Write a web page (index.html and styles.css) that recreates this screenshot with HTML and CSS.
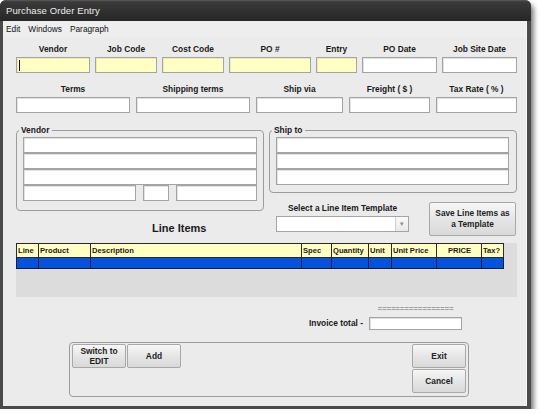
FILE: index.html
```html
<!DOCTYPE html>
<html>
<head>
<meta charset="utf-8">
<title>Purchase Order Entry</title>
<link rel="stylesheet" href="styles.css">
</head>
<body>
<div class="window">
  <div class="titlebar">Purchase Order Entry</div>
  <div class="client">
    <div class="menubar">
      <span>Edit</span><span>Windows</span><span>Paragraph</span>
    </div>
    <div class="form">
      <div class="row row-top">
        <div class="field"><div class="label">Vendor</div><div class="box yellow"><span class="caret"></span></div></div>
        <div class="field"><div class="label">Job Code</div><div class="box yellow"></div></div>
        <div class="field"><div class="label">Cost Code</div><div class="box yellow"></div></div>
        <div class="field"><div class="label">PO #</div><div class="box yellow"></div></div>
        <div class="field"><div class="label">Entry</div><div class="box yellow"></div></div>
        <div class="field"><div class="label">PO Date</div><div class="box"></div></div>
        <div class="field"><div class="label">Job Site Date</div><div class="box"></div></div>
      </div>
      <div class="row row-second">
        <div class="field"><div class="label">Terms</div><div class="box"></div></div>
        <div class="field"><div class="label">Shipping terms</div><div class="box"></div></div>
        <div class="field"><div class="label">Ship via</div><div class="box"></div></div>
        <div class="field"><div class="label">Freight ( $ )</div><div class="box"></div></div>
        <div class="field"><div class="label">Tax Rate ( % )</div><div class="box"></div></div>
      </div>

      <div class="groups">
        <div class="col">
          <fieldset class="group vendor">
            <legend>Vendor</legend>
            <div class="box"></div>
            <div class="box"></div>
            <div class="box"></div>
            <div class="city-row">
              <div class="box city"></div>
              <div class="box state"></div>
              <div class="box zip"></div>
            </div>
          </fieldset>
          <div class="section-title">Line Items</div>
        </div>
        <div class="col">
          <fieldset class="group shipto">
            <legend>Ship to</legend>
            <div class="box"></div>
            <div class="box"></div>
            <div class="box"></div>
          </fieldset>
          <div class="template-row">
            <div class="template">
              <div class="label">Select a Line Item Template</div>
              <div class="combo"><div class="combo-btn">&#9662;</div></div>
            </div>
            <button class="btn save">Save Line Items as<br>a Template</button>
          </div>
        </div>
      </div>

      <div class="grid-area">
        <table class="items">
          <colgroup>
            <col class="c-line"><col class="c-product"><col class="c-desc"><col class="c-spec"><col class="c-qty"><col class="c-unit"><col class="c-uprice"><col class="c-price"><col class="c-tax">
          </colgroup>
          <thead>
            <tr><th>Line</th><th>Product</th><th>Description</th><th>Spec</th><th>Quantity</th><th>Unit</th><th>Unit Price</th><th class="center">PRICE</th><th>Tax?</th></tr>
          </thead>
          <tbody>
            <tr class="selected"><td></td><td></td><td></td><td></td><td></td><td></td><td></td><td></td><td></td></tr>
          </tbody>
        </table>
      </div>

      <div class="totals">
        <div></div>
        <div class="rule">=================</div>
        <div class="total-label">Invoice total -</div>
        <div class="box total"></div>
      </div>

      <div class="actions">
        <div class="left-btns">
          <button class="btn act">Switch to<br>EDIT</button>
          <button class="btn act">Add</button>
        </div>
        <div class="right-btns">
          <button class="btn act">Exit</button>
          <button class="btn act">Cancel</button>
        </div>
      </div>
    </div>
  </div>
</div>
</body>
</html>
```
FILE: styles.css
```css
html, body {
  margin: 0;
  padding: 0;
  background: #ffffff;
}

body {
  font-family: "Liberation Sans", Arial, sans-serif;
  color: #1a1a1a;
}

.window {
  width: 531px;
  height: 409px;
  box-sizing: border-box;
  background: #4a4a4a;
  border-radius: 6px 6px 0 0;
  padding: 0 4px 3px 3px;
  box-shadow: 3px 4px 5px rgba(0, 0, 0, 0.5);
  display: flex;
  flex-direction: column;
}

.titlebar {
  height: 21px;
  margin: 0 -4px 0 -3px;
  padding-left: 6px;
  background: linear-gradient(#5a5a5a 0, #3a3a3a 2px, #262626 100%);
  border-radius: 6px 6px 0 0;
  color: #ececec;
  font-size: 9.5px;
  line-height: 22px;
  letter-spacing: 0.1px;
}

.client {
  flex: 1;
  background: #ebebeb;
  border-right: 1px solid #f8f8f8;
}

.menubar {
  height: 16px;
  padding-left: 3px;
  display: flex;
  gap: 8px;
  font-size: 8.3px;
  line-height: 16px;
  color: #111;
  background: #eeeeee;
}

.form {
  padding: 0 9px 0 13px;
}

.row {
  display: flex;
}

.row-top {
  margin-top: 5px;
  gap: 5px;
}

.row-second {
  margin-top: 9px;
  gap: 6px;
}

.row-top .field:nth-child(1) { width: 74px; }
.row-top .field:nth-child(2) { width: 62px; }
.row-top .field:nth-child(3) { width: 62px; }
.row-top .field:nth-child(4) { width: 82px; }
.row-top .field:nth-child(5) { width: 41px; }
.row-top .field:nth-child(6) { width: 75px; }
.row-top .field:nth-child(7) { width: 75px; }

.row-second .field:nth-child(1) { width: 114px; }
.row-second .field:nth-child(2) { width: 114px; }
.row-second .field:nth-child(3) { width: 87px; }
.row-second .field:nth-child(4) { width: 81px; }
.row-second .field:nth-child(5) { width: 81px; }

.field {
  display: flex;
  flex-direction: column;
}

.label {
  font-size: 8.4px;
  font-weight: bold;
  line-height: 14px;
  text-align: center;
  color: #1a1a1a;
  margin-bottom: 1px;
  white-space: nowrap;
}

.box {
  height: 16px;
  box-sizing: border-box;
  background: #ffffff;
  border: 1px solid #a4a4a4;
  box-shadow: inset 1px 1px 0 #e2e2e2;
  display: flex;
  align-items: center;
}

.box.yellow {
  background: #ffffc4;
  box-shadow: inset 1px 1px 0 #ecebb8;
}

.caret {
  width: 1px;
  height: 11px;
  margin-left: 2px;
  background: #111;
}

/* address group boxes */
.groups {
  display: flex;
  gap: 5px;
  margin-top: 11px;
}

.col {
  width: 248px;
  display: flex;
  flex-direction: column;
}

.group {
  margin: 0;
  border: 1px solid #9c9c9c;
  border-radius: 4px;
  display: flex;
  flex-direction: column;
  min-width: 0;
}

.group legend {
  font-size: 8.4px;
  font-weight: bold;
  line-height: 12px;
  padding: 0 3px 0 2px;
  margin-left: -4px;
  color: #1a1a1a;
}

.vendor {
  padding: 1px 6px 9px 6px;
}

.shipto {
  padding: 1px 7px 7px 6px;
}

.city-row {
  display: flex;
  gap: 7px;
}

.city { width: 113px; }
.state { width: 26px; }
.zip { width: 81px; }

.section-title {
  margin-top: 10px;
  padding-left: 136px;
  font-size: 11px;
  font-weight: bold;
  line-height: 14px;
}

.template-row {
  display: flex;
  align-items: flex-start;
  gap: 20px;
  padding-left: 7px;
  margin-top: 8px;
}

.template {
  width: 133px;
  display: flex;
  flex-direction: column;
}

.template .label {
  margin-bottom: 1px;
}

.combo {
  height: 16px;
  box-sizing: border-box;
  background: #fff;
  border: 1px solid #a4a4a4;
  display: flex;
  justify-content: flex-end;
}

.combo-btn {
  width: 12px;
  border-left: 1px solid #d0d0d0;
  background: linear-gradient(#fafafa, #e8e8e8);
  color: #8a8a8a;
  font-size: 7px;
  line-height: 14px;
  text-align: center;
}

.btn {
  box-sizing: border-box;
  margin: 0;
  padding: 0;
  border: 1px solid #a8a8a8;
  border-radius: 2px;
  background: linear-gradient(#f7f7f7, #e4e4e4 55%, #d9d9d9);
  font-family: "Liberation Sans", Arial, sans-serif;
  font-size: 8.4px;
  font-weight: bold;
  color: #1e1e1e;
  line-height: 10px;
}

.save {
  width: 87px;
  height: 34px;
  margin-top: 1px;
  font-size: 8.3px;
  line-height: 11px;
}

/* line items grid */
.grid-area {
  margin-top: 7px;
  height: 54px;
  background: #dcdcdc;
}

.items {
  width: 487px;
  border-collapse: collapse;
  table-layout: fixed;
}

.c-line { width: 22px; }
.c-product { width: 52px; }
.c-desc { width: 211px; }
.c-spec { width: 30px; }
.c-qty { width: 37px; }
.c-unit { width: 23px; }
.c-uprice { width: 45px; }
.c-price { width: 45px; }
.c-tax { width: 22px; }

.items th {
  height: 13px;
  padding: 0 0 0 1px;
  background: #ffffc4;
  border: 1px solid #2a2a2a;
  font-size: 7.6px;
  font-weight: bold;
  text-align: left;
  line-height: 12px;
  white-space: nowrap;
  overflow: hidden;
  color: #1a1a1a;
}

.items th.center {
  text-align: center;
}

.items td {
  height: 10px;
  padding: 0;
  border: 1px solid #1a1a3a;
}

.items .selected td {
  background: #0552dc;
}

/* invoice total */
.totals {
  display: grid;
  grid-template-columns: auto 93px;
  column-gap: 6px;
  row-gap: 3px;
  justify-content: end;
  margin-right: 55px;
  margin-top: 7px;
}

.rule {
  font-size: 8px;
  line-height: 10px;
  color: #666;
  text-align: center;
  letter-spacing: -0.2px;
  overflow: hidden;
  white-space: nowrap;
}

.total-label {
  font-size: 8.4px;
  font-weight: bold;
  line-height: 13px;
}

.box.total {
  height: 13px;
}

/* bottom action buttons */
.actions {
  margin: 12px 0 0 53px;
  width: 400px;
  height: 55px;
  box-sizing: border-box;
  border: 1px solid #9c9c9c;
  border-radius: 4px;
  padding: 1px 2px 2px 2px;
  display: flex;
  justify-content: space-between;
}

.left-btns {
  display: flex;
  gap: 1px;
  align-items: flex-start;
}

.right-btns {
  display: flex;
  flex-direction: column;
  gap: 1px;
}

.act {
  width: 54px;
  height: 24px;
}
```
